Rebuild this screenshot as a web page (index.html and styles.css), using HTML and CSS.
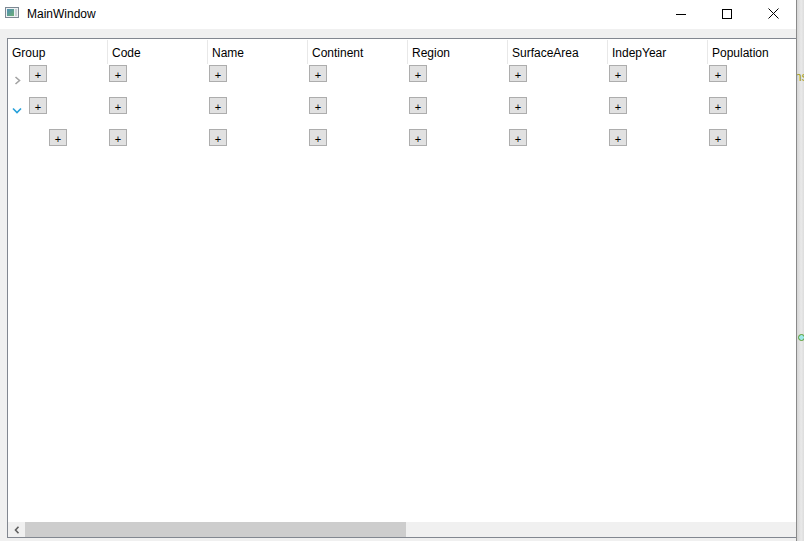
FILE: index.html
```html
<!DOCTYPE html>
<html>
<head>
<meta charset="utf-8">
<title>MainWindow</title>
<link rel="stylesheet" href="styles.css">
</head>
<body>
<div class="screen">
  <div class="window">
    <div class="titlebar">
      <svg class="appicon" width="14" height="11" viewBox="0 0 14 11">
        <defs>
          <linearGradient id="ig" x1="0" y1="0" x2="1" y2="1">
            <stop offset="0" stop-color="#4f8fb5"/>
            <stop offset="1" stop-color="#6cae74"/>
          </linearGradient>
        </defs>
        <rect x="0.5" y="0.5" width="13" height="10" fill="#eef1f3" stroke="#7d8893"/>
        <rect x="2" y="2" width="7" height="7" fill="url(#ig)"/>
        <rect x="10" y="2" width="2" height="7" fill="#c9d0d6"/>
      </svg>
      <span class="title">MainWindow</span>
      <div class="caption-buttons">
        <div class="cap-btn">
          <svg width="10" height="10" viewBox="0 0 10 10"><path d="M0 5.5 H10" stroke="#000" stroke-width="1"/></svg>
        </div>
        <div class="cap-btn">
          <svg width="10" height="10" viewBox="0 0 10 10"><rect x="0.5" y="0.5" width="9" height="9" fill="none" stroke="#000" stroke-width="1"/></svg>
        </div>
        <div class="cap-btn">
          <svg width="11" height="11" viewBox="0 0 11 11"><path d="M0.5 0.5 L10.5 10.5 M10.5 0.5 L0.5 10.5" stroke="#000" stroke-width="1"/></svg>
        </div>
      </div>
    </div>
    <div class="client">
      <div class="grid">
        <div class="header">
          <div class="hcell">Group</div>
          <div class="hcell">Code</div>
          <div class="hcell">Name</div>
          <div class="hcell">Continent</div>
          <div class="hcell">Region</div>
          <div class="hcell">SurfaceArea</div>
          <div class="hcell">IndepYear</div>
          <div class="hcell">Population</div>
        </div>
        <div class="rows">
          <div class="row">
            <div class="cell group">
              <div class="exp"><svg width="20" height="32" viewBox="0 0 20 32"><path d="M7.5 13 L11.5 16.5 L7.5 20" fill="none" stroke="#a3a3a3" stroke-width="1.6"/></svg></div>
              <div class="btn">+</div>
            </div>
            <div class="cell"><div class="btn">+</div></div>
            <div class="cell"><div class="btn">+</div></div>
            <div class="cell"><div class="btn">+</div></div>
            <div class="cell"><div class="btn">+</div></div>
            <div class="cell"><div class="btn">+</div></div>
            <div class="cell"><div class="btn">+</div></div>
            <div class="cell"><div class="btn">+</div></div>
          </div>
          <div class="row">
            <div class="cell group">
              <div class="exp"><svg width="20" height="32" viewBox="0 0 20 32"><path d="M5 12.5 L9 16.5 L13 12.5" fill="none" stroke="#26a0da" stroke-width="1.6"/></svg></div>
              <div class="btn">+</div>
            </div>
            <div class="cell"><div class="btn">+</div></div>
            <div class="cell"><div class="btn">+</div></div>
            <div class="cell"><div class="btn">+</div></div>
            <div class="cell"><div class="btn">+</div></div>
            <div class="cell"><div class="btn">+</div></div>
            <div class="cell"><div class="btn">+</div></div>
            <div class="cell"><div class="btn">+</div></div>
          </div>
          <div class="row">
            <div class="cell group">
              <div class="exp"></div>
              <div class="indent"></div>
              <div class="btn">+</div>
            </div>
            <div class="cell"><div class="btn">+</div></div>
            <div class="cell"><div class="btn">+</div></div>
            <div class="cell"><div class="btn">+</div></div>
            <div class="cell"><div class="btn">+</div></div>
            <div class="cell"><div class="btn">+</div></div>
            <div class="cell"><div class="btn">+</div></div>
            <div class="cell"><div class="btn">+</div></div>
          </div>
        </div>
        <div class="hscroll">
          <div class="sb-btn"><svg width="6" height="8" viewBox="0 0 6 8"><path d="M4.5 0.8 L1.5 4 L4.5 7.2" fill="none" stroke="#606060" stroke-width="1.6"/></svg></div>
          <div class="thumb"></div>
          <div class="track"></div>
          <div class="sb-btn"><svg width="6" height="8" viewBox="0 0 6 8"><path d="M1.5 0.8 L4.5 4 L1.5 7.2" fill="none" stroke="#606060" stroke-width="1.6"/></svg></div>
        </div>
      </div>
    </div>
  </div>
  <div class="side-strip">
    <span class="side-text">ns</span>
    <div class="side-dot"></div>
  </div>
</div>
</body>
</html>
```
FILE: styles.css
```css
html, body {
  margin: 0;
  padding: 0;
}
body {
  font-family: "Liberation Sans", Arial, sans-serif;
  font-size: 12px;
  color: #000;
  background: #f0f0f0;
}
.screen {
  display: flex;
  width: 804px;
  height: 541px;
  overflow: hidden;
}
.window {
  width: 797px;
  flex: none;
  height: 541px;
  box-sizing: border-box;
  border-right: 1px solid #8a8a8a;
  display: flex;
  flex-direction: column;
  overflow: hidden;
}
.titlebar {
  height: 29px;
  flex: none;
  background: #fff;
  display: flex;
  align-items: flex-start;
}
.appicon {
  margin-left: 5px;
  margin-top: 7px;
  flex: none;
}
.title {
  margin-left: 8px;
  padding-top: 7px;
  line-height: 14px;
}
.caption-buttons {
  margin-left: auto;
  display: flex;
}
.cap-btn {
  width: 46px;
  height: 27px;
  display: flex;
  align-items: center;
  justify-content: center;
}
.client {
  flex: 1;
  background: #f0f0f0;
  padding: 9px 0 0 7px;
  overflow: hidden;
}
.grid {
  width: 801px;
  height: 500px;
  box-sizing: border-box;
  border: 1px solid #828790;
  background: #fff;
  display: flex;
  flex-direction: column;
}
.header {
  display: flex;
  height: 25px;
  flex: none;
}
.hcell {
  width: 100px;
  flex: none;
  box-sizing: border-box;
  height: 24px;
  margin-top: 1px;
  padding: 6px 0 0 4px;
  line-height: 14px;
  border-right: 1px solid #e8e8e8;
  white-space: nowrap;
}
.rows {
  flex: 1;
}
.row {
  display: flex;
  height: 32px;
}
.cell {
  width: 100px;
  flex: none;
  box-sizing: border-box;
  padding: 1px 0 0 1px;
  display: flex;
  align-items: flex-start;
}
.cell.group {
  padding: 0;
}
.cell.group .btn {
  margin-top: 1px;
  margin-left: 1px;
}
.exp {
  width: 20px;
  height: 32px;
  flex: none;
}
.exp svg {
  display: block;
}
.indent {
  width: 20px;
  height: 32px;
  flex: none;
}
.btn {
  width: 18px;
  height: 17px;
  box-sizing: border-box;
  border: 1px solid #adadad;
  background: #e1e1e1;
  display: flex;
  align-items: center;
  justify-content: center;
  font-size: 11px;
  line-height: 11px;
  padding-top: 3px;
  flex: none;
}
.hscroll {
  height: 15px;
  flex: none;
  display: flex;
  background: #f0f0f0;
}
.sb-btn {
  width: 17px;
  flex: none;
  display: flex;
  align-items: center;
  justify-content: center;
}
.thumb {
  width: 381px;
  flex: none;
  background: #cdcdcd;
}
.track {
  flex: 1;
}
.side-strip {
  flex: 1;
  background: linear-gradient(to right, #d6d6d6, #e9e9e9 60%, #dcdcdc);
  display: flex;
  flex-direction: column;
  overflow: hidden;
}
.side-text {
  margin-top: 70px;
  margin-left: -2px;
  color: #a09a10;
  line-height: 14px;
  white-space: nowrap;
}
.side-dot {
  margin-top: 250px;
  margin-left: 1px;
  width: 7px;
  height: 7px;
  box-sizing: border-box;
  border-radius: 50%;
  border: 1px solid #5a9a2a;
  background: #9ee8e8;
}
```
